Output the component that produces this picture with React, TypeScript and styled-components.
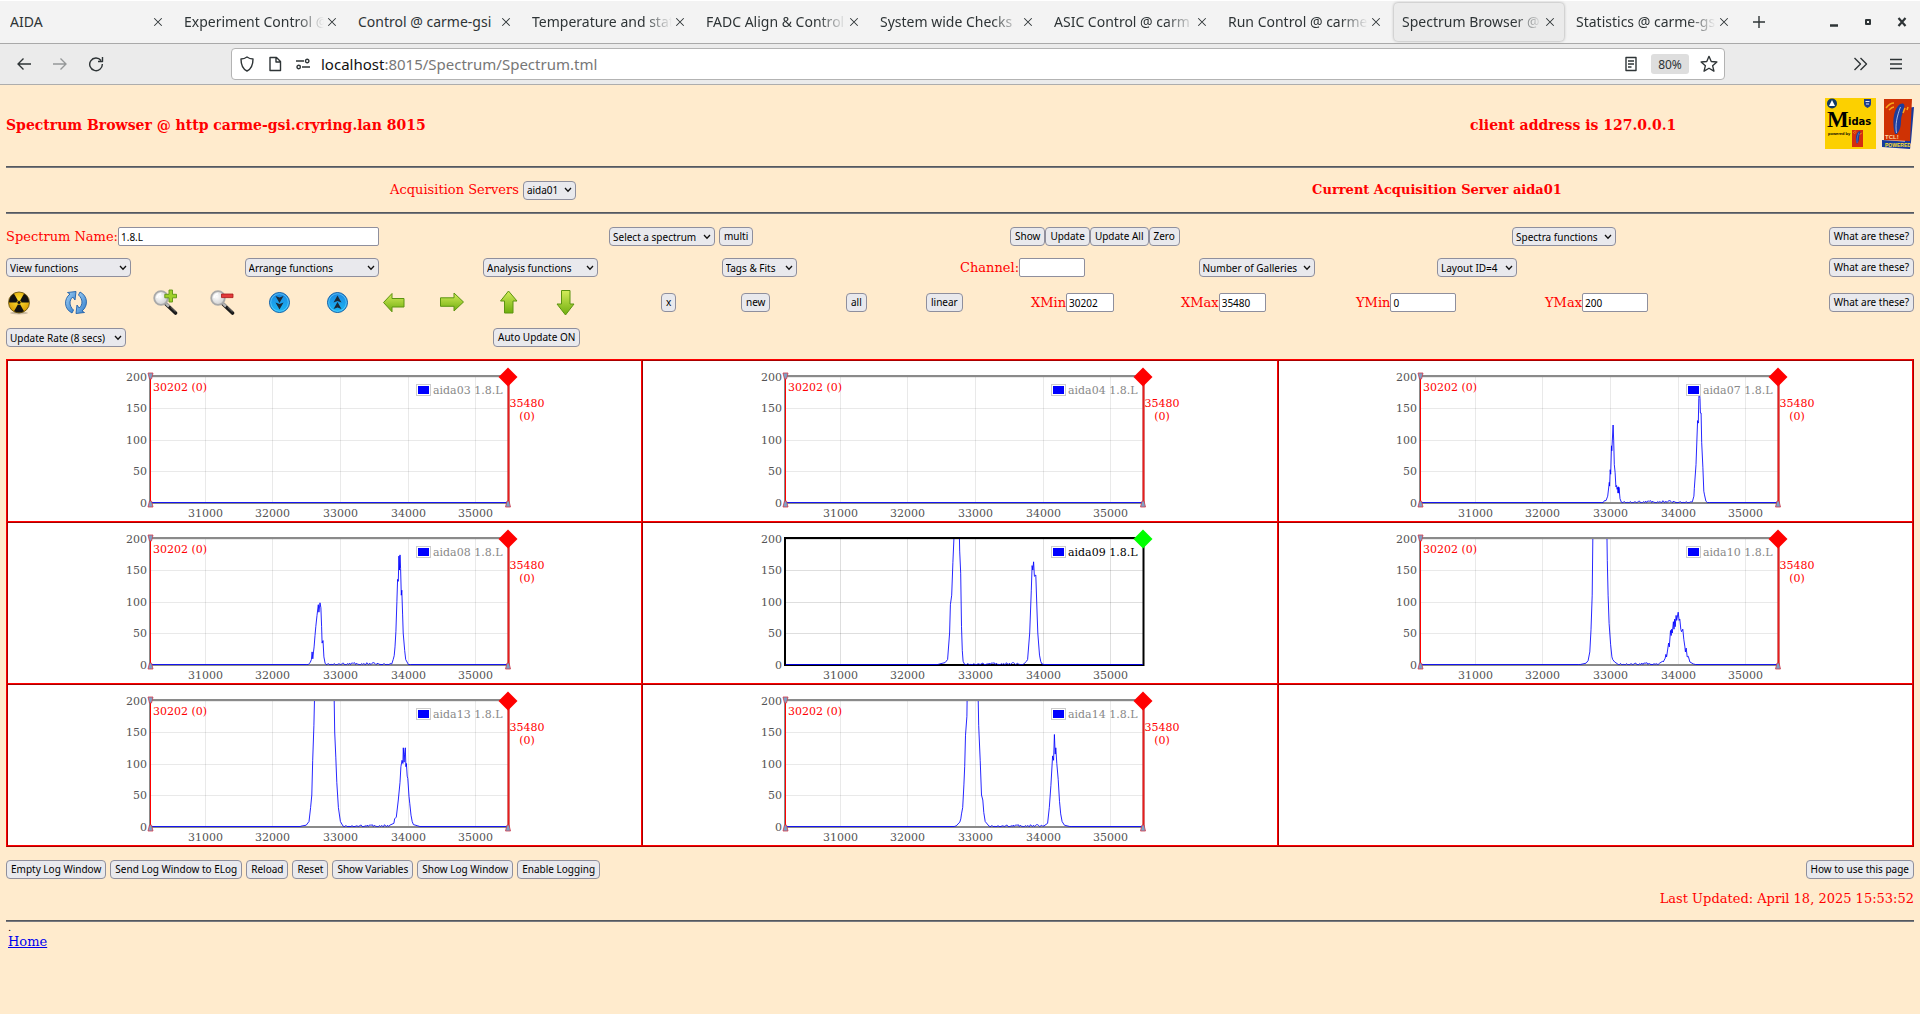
import React from "react";
import styled, { createGlobalStyle, css } from "styled-components";

const serif = `"DejaVu Serif", serif`;
const sans = `"Noto Sans", "Open Sans", sans-serif`;

const GlobalStyle = createGlobalStyle`
  *, *::before, *::after { box-sizing: border-box; }
  body {
    margin: 0;
    background: #ffebcd;
    color: #f00;
    font: 13px/16px ${serif};
  }
  button, input, select { font-family: ${sans}; margin: 0; }
`;

/* ---------- browser window ---------- */

const TabStrip = styled.div`
  display: flex;
  height: 44px;
  padding-right: 1px;
  background: #f3f3f3;
  border-top: 1px solid #fff;
  border-bottom: 1px solid #a9a9a9;
`;

const Tab = styled.div<{ $active?: boolean }>`
  display: flex;
  align-items: center;
  flex: 0 1 170px;
  min-width: 0;
  margin: 2px;
  padding: 0 6px 0 8px;
  border-radius: 4px;
  ${(p) =>
    p.$active &&
    css`
      background: #ebebeb;
      box-shadow: 0 0 3px #999;
    `}
`;

const TabTitle = styled.button<{ $fade: boolean }>`
  flex: 1;
  min-width: 0;
  padding: 0;
  border: 0;
  background: none;
  color: #2e3436;
  font-size: 14px;
  line-height: 20px;
  text-align: left;
  white-space: nowrap;
  overflow: hidden;
  mask-image: ${(p) => (p.$fade ? "linear-gradient(to right, #000 calc(100% - 28px), transparent)" : "none")};
`;

const IconButton = styled.button<{ $w: number; $dim?: boolean }>`
  display: flex;
  align-items: center;
  justify-content: center;
  flex: none;
  width: ${(p) => p.$w}px;
  padding: 0;
  border: 0;
  background: none;
  color: #2e3436;
  opacity: ${(p) => (p.$dim ? 0.45 : 1)};
`;

const WindowButtons = styled.div`
  display: flex;
  margin-left: auto;
`;

const NavBar = styled.div`
  display: flex;
  align-items: center;
  height: 41px;
  padding: 0 6px;
  background: #ebebeb;
  border-bottom: 1px solid #adadad;
`;

const AddressBox = styled.div`
  display: flex;
  align-items: center;
  flex: 1;
  height: 32px;
  margin: 0 117px;
  padding: 0 1px;
  background: #fff;
  border: 1px solid #b3b3b3;
  border-radius: 4px;
`;

const Address = styled.div`
  flex: 1;
  padding-left: 4px;
  color: #777;
  font: 15px/20px ${sans};
  b { color: #111; font-weight: 400; }
`;

const ZoomChip = styled.button`
  width: 38px;
  height: 20px;
  margin: 0 6px;
  padding: 0;
  border: 0;
  border-radius: 3px;
  background: #dedede;
  color: #2e3436;
  font-size: 12px;
`;

/* ---------- page ---------- */

const Page = styled.main`
  padding: 0 6px;
`;

const Rule = styled.hr`
  height: 2px;
  margin: 0;
  border: 0;
  border-top: 1px solid #55585e;
  border-bottom: 1px solid #77797f;
`;

const Header = styled.header`
  display: grid;
  grid-template-columns: 1464fr 444fr;
  align-items: center;
  padding: 13px 0 17px;
`;

const Title = styled.h1`
  margin: 0;
  padding-top: 2px;
  font-size: 14px;
  line-height: 18px;
`;

const HeaderEnd = styled.div`
  display: flex;
  align-items: center;
  justify-content: space-between;
`;

const Logos = styled.div`
  display: flex;
  gap: 5px;
`;

const ServerRow = styled.div`
  display: grid;
  grid-template-columns: 1fr 1fr;
  align-items: center;
  justify-items: center;
  height: 44px;
`;

const Field = styled.div<{ $gap?: number }>`
  display: flex;
  align-items: center;
  gap: ${(p) => p.$gap ?? 0}px;
`;

const Controls = styled.section`
  display: grid;
  gap: 12px;
  padding: 13px 0 12px;
`;

const Row = styled.div<{ $cols: number[]; $tall?: boolean }>`
  display: grid;
  grid-template-columns: ${(p) => p.$cols.map((c) => `minmax(0, ${c}fr)`).join(" ")};
  align-items: center;
  height: ${(p) => (p.$tall ? 27 : 19)}px;
  white-space: nowrap;
`;

const Button = styled.button<{ $end?: boolean }>`
  height: 19px;
  padding: 0 4px;
  border: 1px solid #8f8f9d;
  border-radius: 4px;
  background: #e9e9ed;
  color: #000;
  font-size: 10px;
  line-height: 17px;
  white-space: nowrap;
  justify-self: ${(p) => (p.$end ? "end" : "start")};
`;

const SelectBox = styled.span<{ $w: number }>`
  display: inline-grid;
  align-items: center;
  width: ${(p) => p.$w}px;
  height: 19px;
  > * { grid-area: 1 / 1; }
  > svg { justify-self: end; margin-right: 4px; pointer-events: none; }
`;

const SelectInput = styled.select`
  width: 100%;
  height: 19px;
  padding: 0 3px;
  border: 1px solid #8f8f9d;
  border-radius: 4px;
  background: #e9e9ed;
  color: #000;
  font-size: 10px;
  appearance: none;
`;

const TextInput = styled.input<{ $w: number }>`
  width: ${(p) => p.$w}px;
  height: 19px;
  padding: 0 2px;
  border: 1px solid #8f8f9d;
  border-radius: 2px;
  background: #fff;
  color: #000;
  font-size: 10px;
`;

const ToolButton = styled.button`
  display: block;
  width: 26px;
  height: 27px;
  padding: 0;
  border: 0;
  background: none;
`;

const Gallery = styled.section`
  display: grid;
  grid-template-columns: repeat(3, 1fr);
  border: 1px solid #f00;
  border-right-color: #a80000;
  border-bottom-color: #a80000;
`;

const Cell = styled.div`
  display: flex;
  justify-content: center;
  min-height: 162px;
  background: #fff;
  border: 1px solid #f00;
  border-top-color: #a80000;
  border-left-color: #a80000;
`;

const PlotSvg = styled.svg`
  display: block;
  width: 480px;
  height: 160px;
  font: 11px ${serif};
  fill: #545454;
`;

const Footer = styled.footer`
  padding-top: 13px;
`;

const FooterButtons = styled.div`
  display: flex;
  gap: 4px;
  margin-bottom: 12px;
`;

const Spacer = styled.span`
  flex: 1;
`;

const Updated = styled.p`
  margin: 0 0 13px;
  text-align: right;
`;

const Dot = styled.div`
  padding-left: 2px;
  color: #000;
  font-size: 10px;
  line-height: 12px;
`;

const HomeLink = styled.a`
  margin-left: 2px;
  color: #00e;
`;

/* ---------- small pieces ---------- */

function Select({ label, w, id }: { label: string; w: number; id?: string }) {
  return (
    <SelectBox $w={w}>
      <SelectInput id={id} aria-label={id ? undefined : label}>
        <option>{label}</option>
      </SelectInput>
      <svg width="8" height="6" viewBox="0 0 8 6">
        <path d="M1 1l3 3.2L7 1" fill="none" stroke="#111" strokeWidth="1.3" />
      </svg>
    </SelectBox>
  );
}

function Input({ label, id, value, w }: { label: string; id: string; value: string; w: number }) {
  return (
    <Field>
      <label htmlFor={id}>{label}</label>
      <TextInput id={id} $w={w} defaultValue={value} />
    </Field>
  );
}

const Line = ({ d, size = 16, w = 1.4 }: { d: string; size?: number; w?: number }) => (
  <svg width={size} height={size} viewBox="0 0 16 16" fill="none" stroke="currentColor" strokeWidth={w} strokeLinejoin="round">
    <path d={d} />
  </svg>
);

/* ---------- toolbar drawings ---------- */

const ToolDefs = () => (
  <svg width="0" height="0" style={{ display: "block" }} aria-hidden="true">
    <defs>
      <linearGradient id="green" x1="0" y1="0" x2="0" y2="1">
        <stop offset="0" stopColor="#d4ec5a" />
        <stop offset="1" stopColor="#6fae0e" />
      </linearGradient>
      <radialGradient id="yellow" cx=".5" cy=".4" r=".6">
        <stop offset="0" stopColor="#ffe53a" />
        <stop offset="1" stopColor="#d99a00" />
      </radialGradient>
      <linearGradient id="blue" x1="0" y1="0" x2="0" y2="1">
        <stop offset="0" stopColor="#1d86e0" />
        <stop offset="1" stopColor="#19b8f5" />
      </linearGradient>
      <linearGradient id="sky" x1="0" y1="0" x2="1" y2="1">
        <stop offset="0" stopColor="#a9d6f8" />
        <stop offset="1" stopColor="#2a78c8" />
      </linearGradient>
      <radialGradient id="lens" cx=".4" cy=".4" r=".7">
        <stop offset="0" stopColor="#fff" />
        <stop offset="1" stopColor="#c9c9c9" />
      </radialGradient>
    </defs>
  </svg>
);

const Magnifier = () => (
  <>
    <path d="M14 15l9.500 9" stroke="#1a1a1a" strokeWidth="3.600" strokeLinecap="round" />
    <path d="M14 14.500l3 3" stroke="#b5b5b5" strokeWidth="2.500" />
    <path d="M18.500 18l5 4.800" stroke="#888" strokeWidth=".8" />
    <circle cx="9" cy="9" r="6.800" fill="url(#lens)" stroke="#a9a9a9" strokeWidth="1.800" />
    <path d="M5 9a4 4 0 0 1 4-4" stroke="#fff" strokeWidth="1.500" fill="none" />
  </>
);

const Ball = ({ up }: { up?: boolean }) => (
  <>
    <circle cx="12.500" cy="13.500" r="10" fill="url(#blue)" stroke="#0f5fa8" strokeWidth="1" />
    <circle cx="12.500" cy="13.500" r="8.800" fill="none" stroke="#6fd0fa" strokeWidth=".7" />
    <g transform={up ? "rotate(180 12.500 13.500)" : undefined}>
      <path d="M8.500 7l4 1.500 4-1.500-4 7zM8.500 13.500l4 1.500 4-1.500-4 7z" fill="#1b2a38" />
    </g>
  </>
);

const arrowProps = { fill: "url(#green)", stroke: "#5c9410", strokeWidth: 1, strokeLinejoin: "round" as const };

const tools: { label: string; art: React.ReactNode }[] = [
  {
    label: "Clear",
    art: (
      <>
        <ellipse cx="13" cy="24" rx="9" ry="1.500" fill="#0003" />
        <circle cx="13" cy="13.500" r="10.500" fill="url(#yellow)" stroke="#5b4a0a" strokeWidth=".8" />
        <g fill="#111">
          <path d="M13 13.500L3 13.500A10 10 0 0 1 8 4.840z" />
          <path d="M13 13.500L18 4.840A10 10 0 0 1 23 13.500z" />
          <path d="M13 13.500L18 22.160A10 10 0 0 1 8 22.160z" />
        </g>
        <circle cx="13" cy="13.500" r="2" fill="#111" stroke="#f0c010" strokeWidth=".8" />
      </>
    ),
  },
  {
    label: "Refresh",
    art: (
      <g stroke="#1f5fa8" strokeWidth=".9" fill="url(#sky)">
        <path d="M9 24C1 20 .5 10 7 5L4.500 3.500 13 2.500l-1 8.500-2.200-3C6 11 6 17 10.500 21z" />
        <path d="M17 3c8 4 8.500 14 2 19l2.500 1.500-8.500 1 1-8.500 2.200 3c3.800-3 3.800-9-.7-13z" />
      </g>
    ),
  },
  {
    label: "Zoom in",
    art: (
      <>
        <Magnifier />
        <path d="M17 1h3.500v4.300H24.500v3.500H20.500V13H17V8.800h-4.200V5.300H17z" fill="#9fd02a" stroke="#5f9412" strokeWidth=".9" />
      </>
    ),
  },
  {
    label: "Zoom out",
    art: (
      <>
        <Magnifier />
        <path d="M12.500 5h11.500v3.600H12.500z" fill="#e23b3b" stroke="#a81818" strokeWidth=".8" />
      </>
    ),
  },
  { label: "Compress", art: <Ball /> },
  { label: "Expand", art: <Ball up /> },
  { label: "Left", art: <path {...arrowProps} d="M2.500 13.500l8.500-9V9.500h12v8.500H11v4.800z" /> },
  { label: "Right", art: <path {...arrowProps} d="M24.500 13l-9.500-9V8.800H1.500v8.500H15V22z" /> },
  { label: "Up", art: <path {...arrowProps} d="M12.500 2L21 12h-4v12H8.500V12H4.500z" /> },
  { label: "Down", art: <path {...arrowProps} d="M12.500 26L21 15h-4V1.500H8.500V15H4z" /> },
];

/* ---------- spectra ---------- */

type Pt = [number, number];

interface Spectrum {
  name: string;
  selected?: boolean;
  points: Pt[];
}

const spectra: (Spectrum | null)[] = [
  { name: "aida03 1.8.L", points: [] },
  { name: "aida04 1.8.L", points: [] },
  {
    name: "aida07 1.8.L",
    points: [
      [32900, 0], [32918, 3], [32940, 3], [32966, 10], [32990, 32], [32994, 26], [33002, 52], [33010, 45], [33022, 90], [33027, 82], [33045, 123], [33055, 98],
      [33063, 60], [33075, 48], [33087, 25], [33097, 27], [33105, 21], [33114, 24], [33118, 15], [33124, 25], [33129, 15], [33133, 24], [33147, 6], [33165, 1],
      [34215, 1], [34239, 10], [34245, 22], [34269, 60], [34293, 130], [34303, 126], [34311, 165], [34318, 178], [34328, 165], [34335, 142], [34345, 142],
      [34353, 95], [34371, 55], [34385, 18], [34395, 12], [34415, 2], [34438, 0],
    ],
  },
  {
    name: "aida08 1.8.L",
    points: [
      [32530, 0], [32560, 3], [32578, 8], [32588, 20], [32598, 9], [32608, 20], [32618, 28], [32630, 46], [32642, 60], [32660, 78], [32680, 95], [32688, 83],
      [32705, 98], [32717, 90], [32728, 60], [32736, 34], [32748, 38], [32762, 12], [32780, 2], [33765, 1], [33785, 8], [33800, 14], [33812, 28], [33825, 52],
      [33840, 100], [33850, 135], [33860, 132], [33870, 172], [33878, 150], [33885, 174], [33895, 152], [33905, 110], [33912, 118], [33924, 80],
      [33933, 50], [33955, 22], [33970, 8], [34010, 0],
    ],
  },
  {
    name: "aida09 1.8.L",
    selected: true,
    points: [
      [32480, 1], [32559, 3], [32595, 8], [32625, 50], [32637, 95], [32655, 110], [32673, 162], [32693, 210], [32768, 210], [32774, 180], [32788, 145],
      [32800, 60], [32812, 22], [32824, 5], [32848, 0], [33720, 1], [33760, 5], [33777, 8], [33807, 50], [33831, 118], [33843, 157], [33853, 150], [33865, 163],
      [33876, 140], [33897, 142], [33915, 85], [33927, 50], [33952, 15], [33970, 5], [33988, 1],
    ],
  },
  {
    name: "aida10 1.8.L",
    points: [
      [32560, 0], [32646, 2], [32677, 6], [32701, 20], [32719, 55], [32737, 110], [32747, 210], [32954, 210], [32960, 165], [32972, 110], [32986, 65],
      [33009, 32], [33028, 12], [33040, 8], [33069, 4], [33110, 1], [33732, 2], [33775, 5], [33785, 4], [33815, 10], [33825, 16], [33835, 12],
      [33865, 34], [33875, 28], [33893, 54], [33903, 46], [33910, 56], [33920, 50], [33935, 68], [33945, 56], [33955, 72], [33963, 60], [33975, 78], [33985, 70],
      [34007, 83], [34020, 70], [34030, 72], [34045, 56], [34055, 52], [34075, 56], [34090, 40], [34105, 28], [34113, 20], [34125, 26],
      [34140, 12], [34155, 13], [34180, 4], [34230, 1],
    ],
  },
  {
    name: "aida13 1.8.L",
    points: [
      [32440, 1], [32500, 2], [32542, 8], [32566, 30], [32584, 50], [32596, 105], [32614, 160], [32625, 210], [32912, 210], [32922, 150], [32937, 110],
      [32952, 70], [32976, 30], [33006, 8], [33042, 1], [33735, 2], [33795, 5], [33806, 12], [33831, 15], [33861, 42], [33885, 70], [33899, 95],
      [33915, 105], [33928, 100], [33934, 125], [33946, 102], [33954, 115], [33964, 125], [33972, 95], [33980, 100], [33992, 80], [34000, 76], [34018, 48],
      [34030, 36], [34048, 18], [34066, 8], [34084, 3], [34150, 1],
    ],
  },
  {
    name: "aida14 1.8.L",
    points: [
      [32722, 1], [32776, 7], [32790, 12], [32800, 20], [32818, 30], [32836, 66], [32848, 95], [32860, 145], [32880, 175], [32885, 210], [33045, 210],
      [33055, 160], [33077, 105], [33095, 50], [33115, 42], [33130, 22], [33150, 8], [33204, 1], [34018, 1], [34072, 5], [34097, 30], [34121, 65],
      [34146, 112], [34160, 105], [34172, 146], [34184, 115], [34192, 125], [34208, 100], [34228, 75], [34247, 40], [34265, 20], [34285, 8], [34320, 2],
      [34400, 0],
    ],
  },
  null,
];

const LEFT = 65.5;
const RIGHT = 423;
const TOP = 16;
const BASE = 142;
const px = (c: number) => LEFT + ((c - 30202) / 5278) * (RIGHT - LEFT);
const py = (n: number) => BASE - (n / 200) * (BASE - TOP) - 0.5;

/* fills the long gap between the two peaks with one or two stray counts per bin */
function trace(points: Pt[]) {
  const out: Pt[] = [[30202, 0]];
  points.forEach((p, i) => {
    const prev = points[i - 1];
    if (!prev) out.push([p[0] - 30, 0]);
    if (prev && p[0] - prev[0] > 300 && prev[1] < 200) {
      for (let c = prev[0] + 15, k = 0; c < p[0] - 10; c += 15, k++) {
        out.push([c, [0, 2, 0.2, 1.5, 0, 2.8, 0.5, 1.8, 0, 1, 2.2][(k * 7 + (k % 5) * k) % 11]]);
      }
    }
    out.push(p);
  });
  if (points.length) out.push([points[points.length - 1][0] + 30, 0]);
  out.push([35480, 0]);
  return out.map(([c, n]) => `${px(c).toFixed(1)},${py(n).toFixed(1)}`).join(" ");
}

const Marker = ({ x, y, flip }: { x: number; y: number; flip?: boolean }) => (
  <path
    d={flip ? `M${x - 2.5} ${y - 4}h5l-1.500 6h-2z` : `M${x - 2.5} ${y + 4}h5l-1.500-6h-2z`}
    fill="#7fa3c8"
    stroke="#d23a4a"
    strokeWidth=".8"
  />
);

function Plot({ name, selected, points }: Spectrum) {
  const clip = `clip-${name.slice(0, 6)}`;
  const frame = selected ? "#000" : "#8a8a8a";
  const grid = selected ? "#000" : "#545454";
  return (
    <PlotSvg viewBox="0 0 480 160" role="img" aria-label={name}>
      <clipPath id={clip}>
        <rect x={LEFT} y={TOP} width={RIGHT - LEFT} height={BASE - TOP + 1} />
      </clipPath>
      {[31000, 32000, 33000, 34000, 35000].map((c) => (
        <g key={c}>
          <rect x={Math.round(px(c))} y={TOP} width="1" height={BASE - TOP} fill={grid} opacity=".13" />
          <text x={Math.round(px(c)) + 0.5} y="156" textAnchor="middle">{c}</text>
        </g>
      ))}
      {[0, 50, 100, 150, 200].map((n) => (
        <g key={n}>
          <rect x={LEFT} y={Math.round(py(n))} width={RIGHT - LEFT} height="1" fill={grid} opacity=".13" />
          <text x="62" y={Math.round(py(n) + 4)} textAnchor="end">{n}</text>
        </g>
      ))}
      <rect x={LEFT - 0.5} y={TOP - 1} width={RIGHT - LEFT + 1} height={BASE - TOP + 1} fill="none" stroke={frame} strokeWidth="2" />
      <polyline points={trace(points)} clipPath={`url(#${clip})`} fill="none" stroke="#00f" strokeOpacity=".85" strokeWidth="1" />
      <rect x="331.500" y="23.500" width="14" height="11" fill="#fff" stroke="#ccc" />
      <rect x="333" y="25" width="11" height="8" fill="#00f" />
      <text x="348" y="33" fill={selected ? "#000" : "#888"}>{name}</text>
      {!selected && (
        <g fill="#f00">
          <rect x={LEFT - 0.5} y={TOP} width="1" height={BASE - TOP} />
          <rect x={RIGHT - 0.5} y={TOP} width="2" height={BASE - TOP} opacity=".8" />
          <text x="68" y="30">30202 (0)</text>
          <text x="442" y="46" textAnchor="middle">35480</text>
          <text x="442" y="59" textAnchor="middle">(0)</text>
          <Marker x={LEFT} y={TOP} flip />
          <Marker x={LEFT} y={BASE} />
          <Marker x={RIGHT} y={BASE} />
        </g>
      )}
      <path d={`M${RIGHT} 6.500l9.500 9.500-9.500 9.500-9.500-9.500z`} fill={selected ? "#0f0" : "#f00"} />
    </PlotSvg>
  );
}

/* ---------- logos ---------- */

const TclFeather = () => (
  <>
    <path d="M14 36C11 26 12 14 17 8c3-4 8-3 6 2-1 5-3 8-3 13 0 5-1 9-4 13z" fill="#1c3c9c" />
    <path d="M15.500 35C14 27 16 18 19.500 9" fill="none" stroke="#e8eefc" strokeWidth=".7" />
    <path d="M5 10c3-4 5-5 8-5M8 12c2-2 3-3 5-3M22 15l2-5M26 12l1-3" fill="none" stroke="#f7a51c" strokeWidth="1.500" />
  </>
);

const MidasLogo = () => (
  <svg width="51" height="51" viewBox="0 0 51 51" role="img" aria-label="Midas">
    <rect width="51" height="51" fill="#fcd000" />
    <circle cx="7" cy="5.500" r="5" fill="#123a66" />
    <path d="M7 2l3 6H4z" fill="#fff" />
    <path d="M39 1h7v5c0 2-2 3-3.500 4C41 9 39 8 39 6z" fill="#1d3d8f" />
    <path d="M40.500 3.500h4M41 6h3" stroke="#dfe6f5" strokeWidth="1" />
    <text x="2" y="29" fontFamily="Liberation Serif, serif" fontWeight="700" fontSize="23">M</text>
    <text x="23" y="27" fontFamily="DejaVu Sans, sans-serif" fontWeight="700" fontSize="10">idas</text>
    <text x="3" y="37" fontFamily="Liberation Sans, sans-serif" fontWeight="700" fontSize="4">powered by</text>
    <rect x="27" y="32" width="11" height="17" fill="#d42c10" />
    <g transform="translate(26 31) scale(.4)"><TclFeather /></g>
  </svg>
);

const TclLogo = () => (
  <svg width="33" height="51" viewBox="0 0 33 51" role="img" aria-label="Tcl powered">
    <path d="M26 10l7-1-3 35-6 2zM1 42l29 2-1 7-28-2z" fill="#173a9e" />
    <path d="M3 1l28 0-2 42-26-1z" fill="#cf3204" />
    <TclFeather />
    <text x="4" y="41" fontFamily="Liberation Sans, sans-serif" fontWeight="700" fontSize="6" fill="#ffd9a0">TCL!</text>
    <text x="4" y="49" fontFamily="Liberation Sans, sans-serif" fontWeight="700" fontSize="5" fill="#ffe02a">POWERED</text>
  </svg>
);

/* ---------- application ---------- */

const tabs: { title: string; fade?: boolean; active?: boolean }[] = [
  { title: "AIDA" },
  { title: "Experiment Control @", fade: true },
  { title: "Control @ carme-gsi" },
  { title: "Temperature and stat", fade: true },
  { title: "FADC Align & Control", fade: true },
  { title: "System wide Checks", fade: true },
  { title: "ASIC Control @ carm", fade: true },
  { title: "Run Control @ carme", fade: true },
  { title: "Spectrum Browser @", fade: true, active: true },
  { title: "Statistics @ carme-gs", fade: true },
];

const toolCols = [57, 89, 57, 58, 58, 56, 58, 57, 57, 108, 80, 105, 80, 105, 150, 175, 189, 197, 172];

export default function App() {
  return (
    <>
      <GlobalStyle />
      <ToolDefs />
      <TabStrip>
        {tabs.map((t) => (
          <Tab key={t.title} $active={t.active}>
            <TabTitle $fade={!!t.fade}>{t.title}</TabTitle>
            <IconButton $w={16} aria-label={`Close ${t.title}`}>
              <Line size={12} d="M3 3l10 10M13 3L3 13" />
            </IconButton>
          </Tab>
        ))}
        <IconButton $w={38} aria-label="New tab"><Line size={16} d="M8 2v12M2 8h12" /></IconButton>
        <WindowButtons>
          <IconButton $w={34} aria-label="Minimize"><Line w={2.5} d="M4 11.500h8" /></IconButton>
          <IconButton $w={34} aria-label="Maximize"><Line w={2} d="M6 6h4v4H6z" /></IconButton>
          <IconButton $w={34} aria-label="Close window"><Line w={2.2} d="M4.500 4l7 8M11.500 4l-7 8" /></IconButton>
        </WindowButtons>
      </TabStrip>
      <NavBar>
        <IconButton $w={36} aria-label="Back"><Line d="M15 8H1.500M7.500 2.500L2 8l5.500 5.500" /></IconButton>
        <IconButton $w={36} $dim aria-label="Forward"><Line d="M1 8h13.500M8.500 2.500L14 8l-5.500 5.500" /></IconButton>
        <IconButton $w={36} aria-label="Reload"><Line d="M13 4.500A6.300 6.300 0 1 0 14.300 8M14.500 1v4.500H10" /></IconButton>
        <AddressBox>
          <IconButton $w={28} aria-label="Tracking protection"><Line d="M8 1c2 1.500 4 2 6 2 0 6-1.500 10-6 12-4.500-2-6-6-6-12 2 0 4-.5 6-2z" /></IconButton>
          <IconButton $w={28} aria-label="Site information"><Line d="M3 1.500h6.500L13.500 5.500V14.500H3zM9 2v4h4" /></IconButton>
          <IconButton $w={28} aria-label="Permissions"><Line d="M1 5h8M10.500 5a1.700 1.700 0 1 0 3.400 0 1.700 1.700 0 1 0-3.400 0M7 11h8M2 11a1.700 1.700 0 1 0 3.400 0 1.700 1.700 0 1 0-3.400 0" /></IconButton>
          <Address><b>localhost</b>:8015/Spectrum/Spectrum.tml</Address>
          <IconButton $w={28} aria-label="Reader view"><Line d="M3 1.500h10v13H3zM5 5h6M5 8h6M5 11h3.500" /></IconButton>
          <ZoomChip>80%</ZoomChip>
          <IconButton $w={28} aria-label="Bookmark">
            <Line size={18} d="M8 1.200l2 4.600 5 .4-3.800 3.300 1.200 4.900L8 11.800l-4.400 2.600 1.200-4.900L1 6.200l5-.4z" w={1.2} />
          </IconButton>
        </AddressBox>
        <IconButton $w={36} aria-label="More tools"><Line d="M2.500 2l6 6-6 6M8.500 2l6 6-6 6" /></IconButton>
        <IconButton $w={36} aria-label="Menu"><Line d="M2 3.500h12M2 8h12M2 12.500h12" /></IconButton>
      </NavBar>

      <Page>
        <Header>
          <Title>Spectrum Browser @ http carme-gsi.cryring.lan 8015</Title>
          <HeaderEnd>
            <Title as="h2">client address is 127.0.0.1</Title>
            <Logos><MidasLogo /><TclLogo /></Logos>
          </HeaderEnd>
        </Header>
        <Rule />
        <ServerRow>
          <Field $gap={4}>
            <label htmlFor="servers">Acquisition Servers</label>
            <Select id="servers" label="aida01" w={53} />
          </Field>
          <b>Current Acquisition Server aida01</b>
        </ServerRow>
        <Rule />

        <Controls>
          <Row $cols={[603, 401, 502, 402]}>
            <Input label="Spectrum Name:" id="spectrum" value="1.8.L" w={261} />
            <Field $gap={4}>
              <Select label="Select a spectrum" w={106} />
              <Button>multi</Button>
            </Field>
            <Field>
              <Button>Show</Button>
              <Button>Update</Button>
              <Button>Update All</Button>
              <Button>Zero</Button>
            </Field>
            <Row $cols={[1, 1]}>
              <Select label="Spectra functions" w={104} />
              <Button $end>What are these?</Button>
            </Row>
          </Row>
          <Row $cols={[1, 1, 1, 1, 1, 1, 1, 1]}>
            <Select label="View functions" w={125} />
            <Select label="Arrange functions" w={134} />
            <Select label="Analysis functions" w={115} />
            <Select label="Tags & Fits" w={75} />
            <Input label="Channel:" id="channel" value="" w={66} />
            <Select label="Number of Galleries" w={116} />
            <Select label="Layout ID=4" w={80} />
            <Button $end>What are these?</Button>
          </Row>
          <Row $cols={toolCols} $tall>
            {tools.map((t) => (
              <ToolButton key={t.label} aria-label={t.label}>
                <svg width="26" height="27" viewBox="0 0 26 27" fill="none">{t.art}</svg>
              </ToolButton>
            ))}
            <Button>x</Button>
            <Button>new</Button>
            <Button>all</Button>
            <Button>linear</Button>
            <Input label="XMin" id="xmin" value="30202" w={48} />
            <Input label="XMax" id="xmax" value="35480" w={47} />
            <Input label="YMin" id="ymin" value="0" w={66} />
            <Input label="YMax" id="ymax" value="200" w={66} />
            <Button $end>What are these?</Button>
          </Row>
          <Row $cols={[487, 1421]}>
            <Select label="Update Rate (8 secs)" w={120} />
            <Button>Auto Update ON</Button>
          </Row>
        </Controls>

        <Gallery>
          {spectra.map((s, i) => (
            <Cell key={i}>{s && <Plot {...s} />}</Cell>
          ))}
        </Gallery>

        <Footer>
          <FooterButtons>
            <Button>Empty Log Window</Button>
            <Button>Send Log Window to ELog</Button>
            <Button>Reload</Button>
            <Button>Reset</Button>
            <Button>Show Variables</Button>
            <Button>Show Log Window</Button>
            <Button>Enable Logging</Button>
            <Spacer />
            <Button>How to use this page</Button>
          </FooterButtons>
          <Updated>Last Updated: April 18, 2025 15:53:52</Updated>
          <Rule />
          <Dot>.</Dot>
          <HomeLink href="#home">Home</HomeLink>
        </Footer>
      </Page>
    </>
  );
}
